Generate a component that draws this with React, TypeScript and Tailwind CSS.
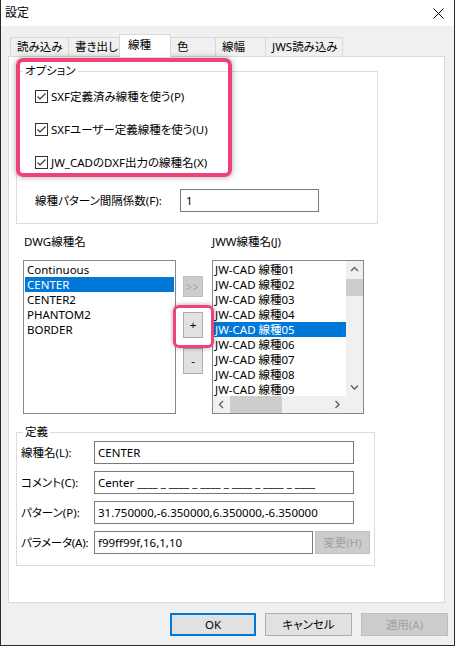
import React from 'react';

const tabs = [
  { label: '読み込み', w: 'w-[59px]' },
  { label: '書き出し', w: 'w-[52px]' },
  { label: '線種', w: 'w-[52px]', active: true },
  { label: '色', w: 'w-[46px]' },
  { label: '線幅', w: 'w-[51px]' },
  { label: 'JWS読み込み', w: 'w-[78px]' },
];

const options = [
  'SXF定義済み線種を使う(P)',
  'SXFユーザー定義線種を使う(U)',
  'JW_CADのDXF出力の線種名(X)',
];

const dwgTypes = ['Continuous', 'CENTER', 'CENTER2', 'PHANTOM2', 'BORDER'];
// only the rows that fit above the horizontal scrollbar
const jwwTypes = Array.from({ length: 9 }, (_, i) => `JW-CAD 線種${String(i + 1).padStart(2, '0')}`);

function Checkbox() {
  return (
    <svg width="13" height="13" viewBox="0 0 13 13" className="shrink-0">
      <rect x="0.5" y="0.5" width="12" height="12" fill="#fff" stroke="#333" />
      <path d="M2.5 6.5 L5 9 L10.5 3.5" fill="none" stroke="#333" strokeWidth="1.1" />
    </svg>
  );
}

function Chevron({ dir }: { dir: 'up' | 'down' | 'left' | 'right' }) {
  const d = {
    up: 'M1 5 L4.5 1.5 L8 5',
    down: 'M1 1.5 L4.5 5 L8 1.5',
    left: 'M5 1 L1.5 4.5 L5 8',
    right: 'M1.5 1 L5 4.5 L1.5 8',
  }[dir];
  const vertical = dir === 'up' || dir === 'down';
  return (
    <svg width={vertical ? 9 : 7} height={vertical ? 7 : 9} viewBox={vertical ? '0 0 9 7' : '0 0 7 9'}>
      <path d={d} fill="none" stroke="#606060" strokeWidth="1.4" />
    </svg>
  );
}

function TextBox({ value, className = '' }: { value: string; className?: string }) {
  return (
    <div className={`h-[23px] border border-[#7a7a7a] bg-white px-[3px] flex items-center whitespace-nowrap overflow-hidden ${className}`}>
      {value}
    </div>
  );
}

export default function App() {
  return (
    <div className="relative w-[455px] h-[646px] bg-[#f0f0f0] border-l border-r border-b border-[#2b2b2b] flex flex-col text-[11.5px] text-black font-['Noto_Sans','Noto_Sans_CJK_JP',sans-serif] [font-feature-settings:'palt'] leading-[16px] overflow-hidden">
      {/* title bar */}
      <div className="h-[26px] bg-white flex items-center justify-between pl-[4px] pr-[10px] shrink-0">
        <span className="text-[12px]">設定</span>
        <svg width="11" height="11" viewBox="0 0 11 11">
          <path d="M0.5 0.5 L10.5 10.5 M10.5 0.5 L0.5 10.5" stroke="#000" strokeWidth="1" />
        </svg>
      </div>

      {/* tabs */}
      <div className="flex items-end h-[22px] mt-[8px] ml-[9px] shrink-0">
        {tabs.map((t, i) => (
          <div
            key={t.label}
            className={`${t.w} ${i > 0 ? '-ml-px' : ''} border-l border-t border-r border-[#d9d9d9] flex items-center whitespace-nowrap ${
              t.active ? 'relative z-10 h-[23px] -mb-px bg-white pl-[8px] pb-[3px]' : 'h-[19px] bg-[#f0f0f0] pl-[6px]'
            }`}
          >
            {t.label}
          </div>
        ))}
      </div>

      {/* tab page */}
      <div className="ml-[7px] w-[437px] h-[547px] bg-white border border-[#d9d9d9] shrink-0 flex flex-col">
        <fieldset className="ml-[7px] mt-[6px] w-[362px] border border-[#dcdcdc] pl-[18px] pb-[11px]">
          <legend className="-ml-[12px] px-[2px]">オプション</legend>
          <div className="pt-[1px]">
            {options.map((o) => (
              <div key={o} className="h-[33px] flex items-center gap-[3px] whitespace-nowrap">
                <Checkbox />
                <span>{o}</span>
              </div>
            ))}
          </div>
          <div className="mt-[10px] flex items-center">
            <span className="w-[145px] whitespace-nowrap">線種パターン間隔係数(F):</span>
            <TextBox value="1" className="w-[139px] pl-[5px]" />
          </div>
        </fieldset>

        <div className="mt-[10px] ml-[15px] flex">
          <span className="w-[188px]">DWG線種名</span>
          <span>JWW線種名(J)</span>
        </div>

        <div className="mt-[10px] ml-[14px] flex">
          {/* DWG list */}
          <div className="w-[153px] h-[154px] border border-[#828790] bg-white p-[1px]">
            {dwgTypes.map((n) => (
              <div
                key={n}
                className={`h-[15px] leading-[15px] px-[2px] whitespace-nowrap ${n === 'CENTER' ? 'bg-[#0078d7] text-white' : ''}`}
              >
                {n}
              </div>
            ))}
          </div>

          {/* move buttons */}
          <div className="ml-[7px] w-[20px] flex flex-col pt-[16px]">
            <div className="h-[21px] bg-[#cccccc] border border-[#bfbfbf] text-[#a0a0a0] text-[10px] flex items-center justify-center tracking-[1px]">
              &gt;&gt;
            </div>
            <div className="mt-[15px] h-[26px] bg-[#e1e1e1] border border-[#adadad] flex items-center justify-center">+</div>
            <div className="mt-[10px] h-[26px] bg-[#e1e1e1] border border-[#adadad] flex items-center justify-center">-</div>
          </div>

          {/* JWW list with scrollbars */}
          <div className="ml-[9px] w-[152px] h-[154px] border border-[#828790] bg-white grid grid-cols-[1fr_17px] grid-rows-[1fr_17px] overflow-hidden">
            <div className="pt-[1px] overflow-hidden">
              {jwwTypes.map((n, i) => (
                <div
                  key={n}
                  className={`h-[15px] leading-[15px] pl-[2px] whitespace-nowrap ${i === 4 ? 'bg-[#0078d7] text-white' : ''}`}
                >
                  {n}
                </div>
              ))}
            </div>
            <div className="bg-[#f0f0f0] flex flex-col">
              <div className="h-[17px] flex items-center justify-center">
                <Chevron dir="up" />
              </div>
              <div className="h-[17px] mt-[1px] bg-[#cdcdcd]" />
              <div className="flex-1" />
              <div className="h-[17px] flex items-center justify-center">
                <Chevron dir="down" />
              </div>
            </div>
            <div className="bg-[#f0f0f0] flex items-center">
              <div className="w-[17px] flex justify-center">
                <Chevron dir="left" />
              </div>
              <div className="w-[52px] h-full bg-[#cdcdcd]" />
              <div className="flex-1" />
              <div className="w-[17px] flex justify-center">
                <Chevron dir="right" />
              </div>
            </div>
            <div className="bg-[#f0f0f0]" />
          </div>
        </div>

        <fieldset className="ml-[7px] mt-[10px] w-[359px] border border-[#dcdcdc] pl-[4px] pb-[11px]">
          <legend className="ml-[2px] px-[2px]">定義</legend>
          <div className="mt-[1px] flex flex-col gap-[7px]">
            <div className="flex items-center">
              <span className="w-[73px] whitespace-nowrap">線種名(L):</span>
              <TextBox value="CENTER" className="w-[260px]" />
            </div>
            <div className="flex items-center">
              <span className="w-[73px] whitespace-nowrap">コメント(C):</span>
              <TextBox value="Center ____ _ ____ _ ____ _ ____ _ ____ _ ____" className="w-[260px]" />
            </div>
            <div className="flex items-center">
              <span className="w-[73px] whitespace-nowrap">パターン(P):</span>
              <TextBox value="31.750000,-6.350000,6.350000,-6.350000" className="w-[260px]" />
            </div>
            <div className="flex items-center">
              <span className="w-[73px] whitespace-nowrap tracking-[-0.2px]">パラメータ(A):</span>
              <TextBox value="f99ff99f,16,1,10" className="w-[219px]" />
              <div className="ml-[2px] w-[55px] h-[23px] bg-[#cccccc] border border-[#bfbfbf] text-[#a0a0a0] flex items-center justify-center whitespace-nowrap">
                変更(H)
              </div>
            </div>
          </div>
        </fieldset>
      </div>

      {/* dialog buttons */}
      <div className="mt-[10px] pr-[6px] flex justify-end gap-[9px]">
        <button className="w-[86px] h-[23px] bg-[#e1e1e1] border-2 border-[#0078d7]">OK</button>
        <button className="w-[87px] h-[23px] bg-[#e1e1e1] border border-[#adadad]">キャンセル</button>
        <button className="w-[87px] h-[23px] bg-[#cccccc] border border-[#bfbfbf] text-[#a0a0a0]">適用(A)</button>
      </div>

      {/* callout frames */}
      <div className="absolute left-[15px] top-[58px] w-[216px] h-[119px] border-4 border-[#ef4277] rounded-[7px] shadow-[0_0_6px_rgba(0,0,0,0.35)]" />
      <div className="absolute left-[172px] top-[305px] w-[41px] h-[43px] border-[3px] border-[#ef4277] rounded-[6px] shadow-[0_0_5px_rgba(0,0,0,0.35)]" />
    </div>
  );
}
